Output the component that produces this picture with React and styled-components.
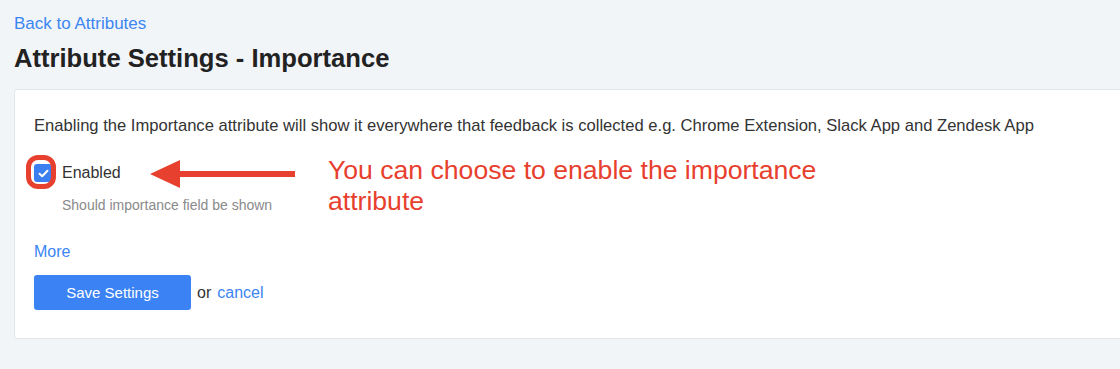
import styled, { createGlobalStyle } from "styled-components";

const GlobalStyle = createGlobalStyle`
  html, body {
    margin: 0;
    padding: 0;
    background: #f2f5f8;
    font-family: "Liberation Sans", Arial, sans-serif;
    color: #2a2a2a;
  }
`;

const Page = styled.div`
  padding: 14px 0 0 14px;
  height: 369px;
  box-sizing: border-box;
  overflow: hidden;
`;

const LinkText = styled.a`
  color: #3b86f2;
  text-decoration: none;
  font-size: ${(p) => p.size || 16}px;
  cursor: pointer;
`;

const Title = styled.h1`
  margin: 8px 0 0;
  font-size: 25.6px;
  font-weight: 700;
  color: #222;
  line-height: 32px;
`;

const Card = styled.div`
  margin-top: 15px;
  width: 1130px;
  height: 250px;
  box-sizing: border-box;
  background: #fff;
  border: 1px solid #e2e7ea;
  border-radius: 3px;
  padding: 26px 19px;
`;

const Intro = styled.p`
  margin: 0;
  font-size: 16.6px;
  line-height: 20px;
  color: #333;
`;

// row with the checkbox field and the annotation laid over it
const FieldRow = styled.div`
  position: relative;
  margin-top: 28px;
`;

const CheckLabel = styled.label`
  display: flex;
  align-items: center;
  gap: 10px;
  font-size: 16px;
  color: #333;
`;

const CheckWrap = styled.span`
  position: relative;
  display: inline-flex;
  width: 18px;
  height: 18px;
`;

const Box = styled.span`
  width: 18px;
  height: 18px;
  border-radius: 3px;
  background: #3b7ff0;
  display: flex;
  align-items: center;
  justify-content: center;
`;

const Ring = styled.span`
  position: absolute;
  left: -8px;
  top: -9px;
  width: 30px;
  height: 34px;
  box-sizing: border-box;
  border: 5px solid #e8402e;
  border-radius: 12px;
`;

const Hint = styled.div`
  margin: 15px 0 0 28px;
  font-size: 14px;
  color: #8a8a8a;
`;

const Arrow = styled.svg`
  position: absolute;
  left: 116px;
  top: -5px;
`;

const Note = styled.div`
  position: absolute;
  left: 294px;
  top: -9px;
  font-size: 26.6px;
  line-height: 31px;
  color: #e8402e;
  width: 540px;
`;

const More = styled.div`
  margin-top: 30px;
`;

const Actions = styled.div`
  display: flex;
  align-items: center;
  gap: 6px;
  margin-top: 14px;
  font-size: 16px;
  color: #333;
`;

const Button = styled.button`
  width: 157px;
  height: 35px;
  border: none;
  border-radius: 3px;
  background: #3b82f4;
  color: #fff;
  font-family: "Liberation Sans", Arial, sans-serif;
  font-size: 15px;
`;

export default function App() {
  return (
    <>
      <GlobalStyle />
      <Page>
        <LinkText size={17}>Back to Attributes</LinkText>
        <Title>Attribute Settings - Importance</Title>
        <Card>
          <Intro>
            Enabling the Importance attribute will show it everywhere that
            feedback is collected e.g. Chrome Extension, Slack App and Zendesk
            App
          </Intro>
          <FieldRow>
            <CheckLabel>
              <CheckWrap>
                <Box>
                  <svg width="11" height="9" viewBox="0 0 11 9">
                    <path
                      d="M1.5 4.8 L4.2 7.3 L9.5 1.8"
                      fill="none"
                      stroke="#fff"
                      strokeWidth="2"
                      strokeLinecap="round"
                      strokeLinejoin="round"
                    />
                  </svg>
                </Box>
                <Ring />
              </CheckWrap>
              Enabled
            </CheckLabel>
            <Hint>Should importance field be shown</Hint>
            <Arrow width="146" height="30" viewBox="0 0 146 30">
              <polygon points="0,15 30,1 30,29" fill="#e8402e" />
              <rect x="28" y="12" width="117" height="6" fill="#e8402e" />
            </Arrow>
            <Note>You can choose to enable the importance attribute</Note>
          </FieldRow>
          <More>
            <LinkText>More</LinkText>
          </More>
          <Actions>
            <Button>Save Settings</Button>
            or <LinkText>cancel</LinkText>
          </Actions>
        </Card>
      </Page>
    </>
  );
}
